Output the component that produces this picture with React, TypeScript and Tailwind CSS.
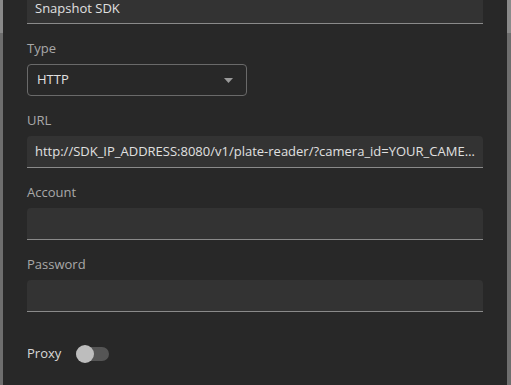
import React from "react";

function Field({ label, value }: { label: string; value?: string }) {
  return (
    <div className="flex flex-col">
      <div className="h-[24px] pt-[2px] flex items-center text-[13px] text-[#a8a8a8]">{label}</div>
      <div className="h-[32px] mt-[4px] bg-[#333333] rounded-t-[4px] border-b border-[#8a8a8a] flex items-center px-[8px] text-[13px] text-[#e0e0e0] min-w-0">
        <span className="truncate">{value}</span>
      </div>
    </div>
  );
}

export default function App() {
  return (
    <div
      className="w-[511px] h-[385px] bg-[#282828] flex overflow-hidden"
      style={{ fontFamily: '"Open Sans", sans-serif' }}
    >
      <div className="w-[3px] shrink-0 flex flex-col bg-[#6e6e6e]">
        <div className="h-[33px] bg-[#8a8a8a]" />
      </div>
      <div className="flex-1 min-w-0 flex flex-col px-[24px]">
        <div className="h-[24px] shrink-0 bg-[#333333] border-b border-[#8a8a8a] flex items-center px-[8px] text-[13px] text-[#e0e0e0]">
          <span className="-mt-[6px]">Snapshot SDK</span>
        </div>
        <div className="mt-[12px] h-[24px] pt-[2px] flex items-center text-[13px] text-[#a8a8a8]">Type</div>
        <div className="mt-[4px] w-[220px] h-[32px] border border-[#6a6a6a] rounded-[4px] flex items-center justify-between pl-[9px] pr-[13px] text-[13px] text-[#e0e0e0]">
          <span>HTTP</span>
          <svg width="9" height="5" viewBox="0 0 9 5">
            <path d="M0 0 L9 0 L4.5 5 Z" fill="#9a9a9a" />
          </svg>
        </div>
        <div className="mt-[12px]">
          <Field label="URL" value="http://SDK_IP_ADDRESS:8080/v1/plate-reader/?camera_id=YOUR_CAMERA_ID" />
        </div>
        <div className="mt-[12px]">
          <Field label="Account" />
        </div>
        <div className="mt-[12px]">
          <Field label="Password" />
        </div>
        <div className="mt-[30px] flex items-center h-[24px]">
          <span className="text-[13px] text-[#d8d8d8]">Proxy</span>
          <div className="relative ml-[15px] w-[33px] h-[14px] rounded-full bg-[#555555]">
            <div className="absolute left-0 top-[-2px] w-[18px] h-[18px] rounded-full bg-[#bdbdbd]" />
          </div>
        </div>
      </div>
      <div className="w-[4px] shrink-0 flex flex-col bg-[#6e6e6e]">
        <div className="h-[33px] bg-[#8a8a8a]" />
      </div>
    </div>
  );
}
